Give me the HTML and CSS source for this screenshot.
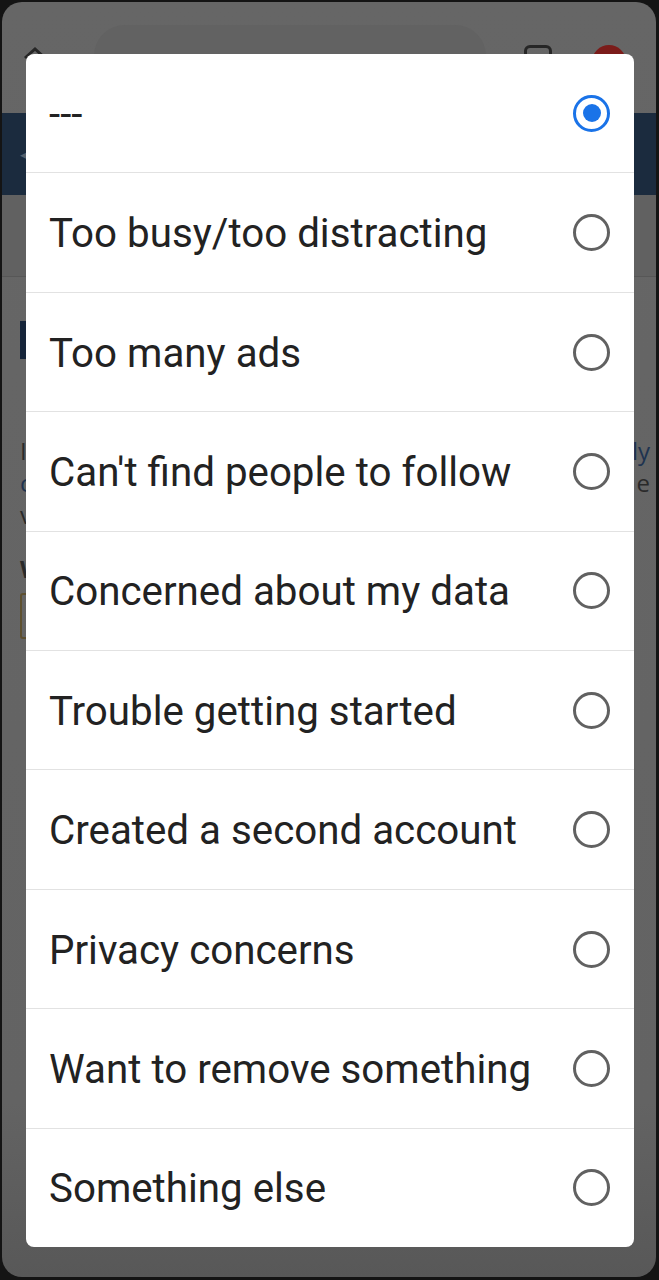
FILE: index.html
```html
<!DOCTYPE html>
<html lang="en">
<head>
<meta charset="utf-8">
<title>Select reason</title>
<link rel="stylesheet" href="styles.css">
</head>
<body>
<div class="screen">
  <div class="page">
    <div class="toolbar">
      <svg class="home" width="26" height="26" viewBox="0 0 26 26"><path d="M3 13 L13 4 L23 13" fill="none" stroke="#262626" stroke-width="3"/></svg>
      <div class="urlbar"></div>
      <div class="tabs"></div>
      <div class="avatar"></div>
    </div>
    <div class="navband"><span class="back">&#9664;</span></div>
    <div class="subband"></div>
    <div class="content">
      <div class="heading"></div>
      <p class="line"><span>I</span><span class="link">ly</span></p>
      <p class="line"><span class="link">c</span><span>e</span></p>
      <p class="line"><span>v</span><span></span></p>
      <p class="line bold"><span>W</span><span></span></p>
      <div class="box"></div>
    </div>
  </div>

  <div class="dialog">
    <div class="option"><span class="label">---</span><span class="radio checked"></span></div>
    <div class="option"><span class="label">Too busy/too distracting</span><span class="radio"></span></div>
    <div class="option"><span class="label">Too many ads</span><span class="radio"></span></div>
    <div class="option"><span class="label">Can't find people to follow</span><span class="radio"></span></div>
    <div class="option"><span class="label">Concerned about my data</span><span class="radio"></span></div>
    <div class="option"><span class="label">Trouble getting started</span><span class="radio"></span></div>
    <div class="option"><span class="label">Created a second account</span><span class="radio"></span></div>
    <div class="option"><span class="label">Privacy concerns</span><span class="radio"></span></div>
    <div class="option"><span class="label">Want to remove something</span><span class="radio"></span></div>
    <div class="option"><span class="label">Something else</span><span class="radio"></span></div>
  </div>
</div>
</body>
</html>
```

FILE: styles.css
```css
* { box-sizing: border-box; }
html, body { margin: 0; padding: 0; }
body {
  width: 659px;
  height: 1280px;
  background: #141414;
  font-family: Roboto, "Noto Sans", "Liberation Sans", sans-serif;
  overflow: hidden;
}
.screen {
  position: relative;
  margin: 2px 3px 0 2px;
  height: 1275px;
  border-radius: 20px;
  overflow: hidden;
  background: linear-gradient(#666666 0, #636363 1100px, #585858 1275px);
}
.page { display: flex; flex-direction: column; }
.toolbar {
  height: 111px;
  display: flex;
  align-items: flex-start;
  padding: 23px 0 0 20px;
}
.home { margin-top: 20px; }
.urlbar {
  width: 392px;
  height: 62px;
  border-radius: 31px;
  background: #626262;
  margin-left: 46px;
}
.tabs {
  width: 28px; height: 28px;
  border: 3px solid #262626;
  border-radius: 6px;
  margin: 20px 0 0 38px;
}
.avatar {
  width: 34px; height: 34px;
  border-radius: 50%;
  background: #7b1c1a;
  margin: 20px 0 0 40px;
}
.navband {
  height: 82px;
  background: #1b2b3e;
  display: flex;
  align-items: center;
  padding-left: 18px;
}
.back { color: #55606c; font-size: 20px; }
.subband {
  height: 82px;
  background: #616161;
  border-bottom: 1px solid #575757;
}
.content { padding: 44px 6px 0 18px; }
.heading { width: 10px; height: 38px; background: #16253a; }
.line {
  margin: 0;
  height: 32px;
  display: flex;
  justify-content: space-between;
  font-family: "Open Sans", sans-serif;
  font-size: 24px;
  color: #2a2a2a;
  line-height: 32px;
}
.line:first-of-type { margin-top: 76px; }
.line .link { color: #1e3350; }
.bold { font-weight: 700; margin-top: 22px; }
.box {
  margin-top: 8px;
  width: 30px; height: 46px;
  border: 2px solid #5e5030;
  border-radius: 3px;
}
.dialog {
  position: absolute;
  left: 24px;
  top: 52px;
  width: 608px;
  height: 1193px;
  background: #fff;
  border-radius: 8px;
  overflow: hidden;
  display: flex;
  flex-direction: column;
}
.option {
  flex: 1;
  display: flex;
  align-items: center;
  justify-content: space-between;
  padding: 0 24px 0 23px;
  border-top: 1px solid #e2e2e2;
}
.option:first-child { border-top: none; }
.label {
  font-size: 40.3px;
  color: #222;
  padding-top: 2px;
}
.radio {
  width: 37px; height: 37px;
  border-radius: 50%;
  border: 3px solid #616161;
  display: flex;
  align-items: center;
  justify-content: center;
}
.radio.checked { border-color: #1a73e8; }
.radio.checked::after {
  content: "";
  width: 18px; height: 18px;
  border-radius: 50%;
  background: #1a73e8;
}
```
